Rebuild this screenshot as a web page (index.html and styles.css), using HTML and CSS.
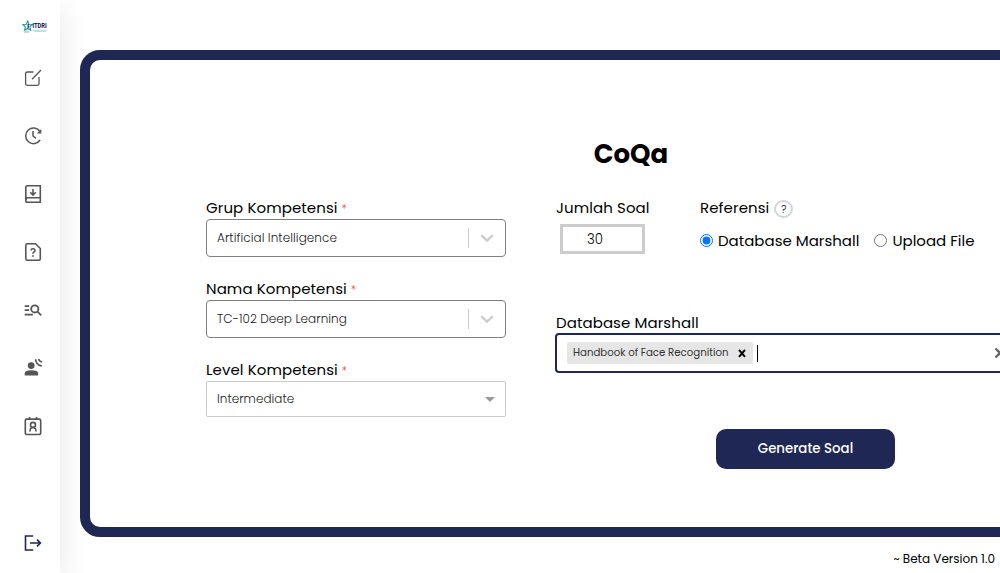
FILE: index.html
```html
<!DOCTYPE html>
<html lang="id">
<head>
<meta charset="utf-8">
<title>CoQa</title>
<link rel="stylesheet" href="styles.css">
</head>
<body>
<div class="app">
  <nav class="sidebar">
    <svg class="logo" viewBox="0 0 28 13">
      <path d="M5.6 1 7 4.2l3.6.3-2.7 2.3.8 3.3-3.1-1.7-3 1.7.7-3.3L.8 4.5l3.5-.3z" fill="none" stroke="#2898ad" stroke-width="1.1"/>
      <path d="M6.2 4v4.2" stroke="#1f2755" stroke-width="1.2"/>
      <path d="M1.5 11h6M2 12.2h5" stroke="#999" stroke-width=".6"/>
      <path d="M10 10.2h15M12 11.4h12" stroke="#8ad0da" stroke-width=".7"/>
      <text x="10.4" y="8.2" class="logo-text" textLength="14.4" lengthAdjust="spacingAndGlyphs">ITDRI</text>
    </svg>
    <div class="menu">
      <svg class="icon" viewBox="0 0 20 20"><path d="M10.5 4H4.3Q2.6 4 2.6 5.5v10.3q0 1.5 1.5 1.5h10.4q1.5 0 1.5-1.5V9M9 11.2 18 2" stroke-width="1.3"/></svg>
      <svg class="icon" viewBox="0 0 20 20"><path d="M17 5.5A7.8 7.8 0 1 0 17.1 14M10 5v5l3 2.4" stroke-width="1.5"/><path d="M18.3 3v4.5h-4.5z" class="solid"/></svg>
      <svg class="icon" viewBox="0 0 20 20"><path d="M4.5 1.7h12.8v16.6H4.7Q2.8 18.3 2.8 16.5v-13q0-1.8 1.7-1.8zM3 15.8q.2-2 1.8-2h12.5M10 5v6M7.2 8.2 10 11l2.8-2.8" stroke-width="1.6"/></svg>
      <svg class="icon" viewBox="0 0 20 20"><path d="M4.3 1.7h8.2l4.8 4.8v10.3q0 1.5-1.5 1.5H4.3q-1.5 0-1.5-1.5V3.2q0-1.5 1.5-1.5zM8 8.5q.2-1.7 2-1.7t2 1.6q0 1.1-1.1 1.5-.9.4-.9 1.8M10 13.2v1.5" stroke-width="1.6"/></svg>
      <svg class="icon" viewBox="0 0 20 20"><path d="M1.7 6.2h4.5M1.7 10.2h4.5M1.7 14.6h8.2M14.5 11.7l3.7 3.6" stroke-width="1.8"/><circle cx="11.8" cy="8.9" r="3.6" stroke-width="1.8"/></svg>
      <svg class="icon waves" viewBox="0 0 20 20"><circle cx="8.2" cy="8.6" r="3.4" class="solid"/><path d="M1.7 18.5v-2q0-3.3 6.7-3.3t6.7 3.3v2z" class="solid"/><path d="M12.6 2.2q.4 6 6.2 6.6M15.8 2q.2 2.6 3.4 3" stroke-width="1.7"/></svg>
      <svg class="icon" viewBox="0 0 20 20"><rect x="2.3" y="3.1" width="15.4" height="15.4" rx="1.5" stroke-width="1.6"/><path d="M6.5 1v2.5M13.5 1v2.5M7 15.5q0-4 3-4t3 4" stroke-width="1.6"/><circle cx="10" cy="8.9" r="2.5" stroke-width="1.6"/></svg>
    </div>
    <svg class="icon logout" viewBox="0 0 20 20"><path d="M10.2 3H2.5v14h7.7M7 10h10.5M14 6.6 17.4 10 14 13.4" stroke-width="1.6"/></svg>
  </nav>
  <main class="page">
    <section class="card">
      <h1 class="title">CoQa</h1>
      <div class="columns">
        <div class="left">
          <div class="field">
            <label class="label">Grup Kompetensi<span class="req">*</span></label>
            <div class="select"><span class="value">Artificial Intelligence</span><svg class="chevron" viewBox="0 0 20 20"><path d="m5 7.8 5 4.8 5-4.8"/></svg></div>
          </div>
          <div class="field">
            <label class="label">Nama Kompetensi<span class="req">*</span></label>
            <div class="select"><span class="value">TC-102 Deep Learning</span><svg class="chevron" viewBox="0 0 20 20"><path d="m5 7.8 5 4.8 5-4.8"/></svg></div>
          </div>
          <div class="field">
            <label class="label">Level Kompetensi<span class="req">*</span></label>
            <div class="select plain"><span class="value tight">Intermediate</span><span class="caret"></span></div>
          </div>
        </div>
        <div class="right">
          <div class="top-row">
            <div class="count">
              <label class="label">Jumlah Soal</label>
              <div class="number">30</div>
            </div>
            <div class="reference">
              <div class="label ref-label"><span>Referensi</span><span class="help">?</span></div>
              <div class="radios">
                <input type="radio" name="ref" checked><span>Database Marshall</span>
                <input type="radio" name="ref" class="second"><span>Upload File</span>
              </div>
            </div>
          </div>
          <label class="label l-db">Database Marshall</label>
          <div class="multi">
            <div class="tag"><span>Handbook of Face Recognition</span><svg class="x" viewBox="0 0 10 10"><path d="m2 1.8 6 7M8 1.8l-6 7"/></svg></div>
            <span class="cursor"></span>
            <svg class="clear" viewBox="0 0 12 12"><path d="m1.5 1.5 9 9M10.5 1.5l-9 9"/></svg>
          </div>
          <button class="submit">Generate Soal</button>
        </div>
      </div>
    </section>
    <footer class="version">~ Beta Version 1.0</footer>
  </main>
</div>
</body>
</html>
```
FILE: styles.css
```css
* { box-sizing: border-box; }
body {
  margin: 0;
  background: #fff;
  color: #000;
  font-family: Poppins, Inter, sans-serif;
  font-size: 16px;
}
.app { display: flex; width: 1000px; height: 573px; overflow: hidden; }
.sidebar {
  flex: none;
  display: flex;
  flex-direction: column;
  align-items: center;
  width: 60px;
  padding: 20px 0 20px 6px;
  background: #fff;
  box-shadow: 0 8px 32px rgba(0, 0, 0, .1);
}
.logo { width: 28px; height: 13px; margin-left: 6px; }
.logo-text { font: 800 7px Roboto, sans-serif; fill: #1f2755; }
.menu { display: flex; flex-direction: column; gap: 38px; margin-top: 35px; }
.icon { display: block; width: 20px; height: 20px; fill: none; stroke: #555; }
.icon .solid { fill: #555; stroke: none; }
.waves { margin: -1px 0 1px; }
.logout { margin-top: auto; stroke: #1f2755; }
.page { flex: none; width: 1120px; padding: 50px 0 0 20px; }
.card {
  width: 1100px;
  height: 487px;
  padding-top: 74px;
  border: 10px solid #1f2755;
  border-radius: 20px;
  background: #fff;
}
.title { margin: 0; padding-left: 2px; text-align: center; font-size: 26px; line-height: 40px; font-weight: 700; }
.columns { display: flex; gap: 49px; padding: 22px 0 0 116px; }
.left { width: 300px; }
.field { margin-bottom: 20px; }
.label { display: block; height: 23px; line-height: 24px; font-size: 15px; letter-spacing: .08px; white-space: nowrap; }
.req { margin-left: 4px; color: #f33; font-size: 11.5px; font-weight: 300; letter-spacing: 0; }
.select {
  display: flex;
  align-items: center;
  justify-content: space-between;
  height: 38px;
  padding-left: 10px;
  border: 1px solid #808080;
  border-radius: 4px;
}
.value { color: #222; font-size: 12px; font-weight: 300; letter-spacing: .07px; white-space: nowrap; }
.chevron {
  width: 37px;
  height: 20px;
  border-left: 1px solid #ccc;
  fill: none;
  stroke: #ccc;
  stroke-width: 2.4;
  stroke-linecap: round;
}
.plain { height: 36px; padding-right: 10px; border-color: #ccc; border-radius: 2px; }
.tight { letter-spacing: .04px; }
.caret { border: 5px solid transparent; border-top-color: #999; border-bottom: 0; }
.right { width: 500px; }
.top-row { display: flex; height: 114px; padding-left: 1px; }
.count { width: 144px; }
.number {
  width: 85px;
  height: 30px;
  margin: 5px 0 0 4px;
  padding-left: 24px;
  border: 3px solid #ccc;
  font-size: 13.33px;
  font-weight: 300;
  line-height: 25px;
}
.ref-label { display: flex; align-items: center; }
.help {
  width: 19px;
  height: 18px;
  margin: 3px 0 0 5px;
  border: 2px solid #d5d5d5;
  border-radius: 50%;
  font-size: 10px;
  font-weight: 300;
  line-height: 15px;
  text-align: center;
}
.radios { display: flex; align-items: center; height: 24px; margin-top: 9px; font-size: 15px; white-space: nowrap; }
.radios input { flex: none; width: 13px; height: 13px; margin: 0 5px 0 0; }
.radios .second { margin-left: 15px; }
.l-db { padding-left: 1px; line-height: 26px; }
.multi {
  display: flex;
  align-items: center;
  width: 480px;
  height: 40px;
  padding-left: 10px;
  border: 2px solid #1f2755;
  border-radius: 4px;
}
.tag {
  display: flex;
  align-items: center;
  width: 186px;
  height: 22px;
  padding-left: 6px;
  border-radius: 2px;
  background: #e6e6e6;
  color: #333;
  font-size: 10.2px;
  white-space: nowrap;
}
.x { width: 10px; height: 10px; margin: 0 6px 0 auto; stroke: #000; stroke-width: 2; }
.cursor { width: 1px; height: 17px; margin-left: 4px; background: #000; }
.clear { width: 12px; height: 12px; margin: 0 27px 0 auto; stroke: #666; stroke-width: 2.3; }
.submit {
  display: block;
  width: 179px;
  height: 40px;
  margin: 56px 0 0 161px;
  padding: 0;
  border: 0;
  border-radius: 10px;
  background: #1f2755;
  color: #fff;
  font: 500 13.33px/38px Poppins, Inter, sans-serif;
}
.version { width: 915px; padding-top: 13px; text-align: right; font-size: 12px; line-height: 18px; }
```
